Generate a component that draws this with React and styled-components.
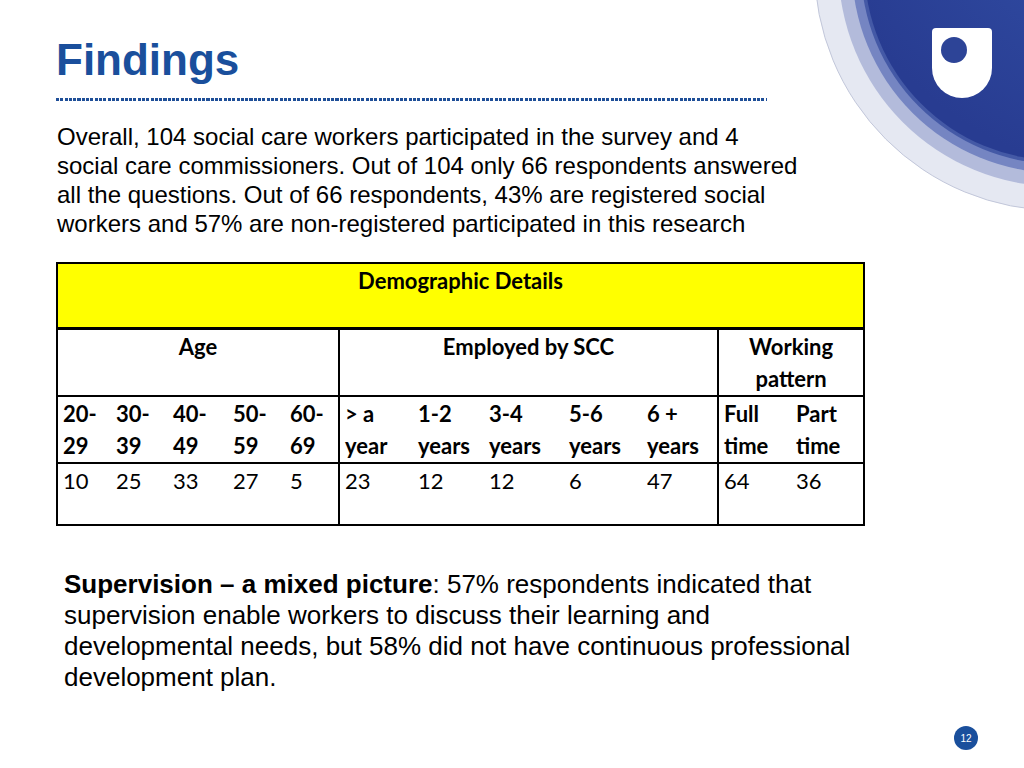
import React from 'react';
import styled, { createGlobalStyle } from 'styled-components';

const GlobalStyle = createGlobalStyle`
  html, body {
    margin: 0;
    padding: 0;
    background: #ffffff;
  }
`;

const ageCols = [
  { range: ['20-', '29'], value: '10', width: 54 },
  { range: ['30-', '39'], value: '25', width: 57 },
  { range: ['40-', '49'], value: '33', width: 60 },
  { range: ['50-', '59'], value: '27', width: 57 },
  { range: ['60-', '69'], value: '5', width: 54 },
];

const employedCols = [
  { range: ['> a', 'year'], value: '23', width: 74 },
  { range: ['1-2', 'years'], value: '12', width: 71 },
  { range: ['3-4', 'years'], value: '12', width: 80 },
  { range: ['5-6', 'years'], value: '6', width: 78 },
  { range: ['6 +', 'years'], value: '47', width: 76 },
];

const workCols = [
  { range: ['Full', 'time'], value: '64', width: 73 },
  { range: ['Part', 'time'], value: '36', width: 73 },
];

const Logo = () => (
  <LogoWrap>
    <svg width="260" height="240" viewBox="0 0 260 240">
      <defs>
        <radialGradient id="disc" cx="0.75" cy="0.15" r="0.9">
          <stop offset="0" stopColor="#3656ae" />
          <stop offset="1" stopColor="#283c91" />
        </radialGradient>
      </defs>
      <circle cx="294" cy="-33" r="243.5" fill="#e5e8f2" stroke="#c2c7da" strokeWidth="1" />
      <circle cx="294" cy="-33" r="219.5" fill="#b3bbdb" />
      <circle cx="294" cy="-33" r="206" fill="#7585c2" />
      <circle cx="294" cy="-33" r="197" fill="#4459a6" />
      <circle cx="294" cy="-33" r="193.5" fill="url(#disc)" />
      <path
        d="M172 28 H224 Q228 28 228 32 V68 A30 30 0 0 1 168 68 V32 Q168 28 172 28 Z"
        fill="#ffffff"
      />
      <circle cx="190" cy="50" r="13" fill="#2d4497" />
    </svg>
  </LogoWrap>
);

const App = () => {
  const groups = [...ageCols, ...employedCols, ...workCols];
  const isGroupStart = (i) => i === ageCols.length || i === ageCols.length + employedCols.length;

  return (
    <>
      <GlobalStyle />
      <Slide>
        <Logo />
        <Title>Findings</Title>
        <DottedRule />
        <Intro>
          Overall, 104 social care workers participated in the survey and 4<br />
          social care commissioners. Out of 104 only 66 respondents answered<br />
          all the questions. Out of 66 respondents, 43% are registered social<br />
          workers and 57% are non-registered participated in this research
        </Intro>

        <Table>
          <colgroup>
            {groups.map((c, i) => (
              <col key={i} style={{ width: c.width }} />
            ))}
          </colgroup>
          <tbody>
            <tr>
              <Banner colSpan={groups.length}>Demographic Details</Banner>
            </tr>
            <tr>
              <GroupHead colSpan={ageCols.length}>Age</GroupHead>
              <GroupHead colSpan={employedCols.length} divider>
                Employed by SCC
              </GroupHead>
              <GroupHead colSpan={workCols.length} divider>
                Working<br />pattern
              </GroupHead>
            </tr>
            <RangeRow>
              {groups.map((c, i) => (
                <Cell key={i} divider={isGroupStart(i)} bold>
                  {c.range[0]}
                  <br />
                  {c.range[1]}
                </Cell>
              ))}
            </RangeRow>
            <ValueRow>
              {groups.map((c, i) => (
                <Cell key={i} divider={isGroupStart(i)}>
                  {c.value}
                </Cell>
              ))}
            </ValueRow>
          </tbody>
        </Table>

        <Summary>
          <strong>Supervision – a mixed picture</strong>: 57% respondents indicated that<br />
          supervision enable workers to discuss their learning and<br />
          developmental needs, but 58% did not have continuous professional<br />
          development plan.
        </Summary>

        <PageBadge>12</PageBadge>
      </Slide>
    </>
  );
};

export default App;

const Slide = styled.div`
  position: relative;
  width: 1024px;
  height: 768px;
  overflow: hidden;
  background: #ffffff;
  font-family: 'Liberation Sans', Arial, sans-serif;
  color: #000000;
  padding: 38px 0 0 56px;
  box-sizing: border-box;
`;

const LogoWrap = styled.div`
  position: absolute;
  top: 0;
  right: 0;
  width: 260px;
  height: 240px;
  line-height: 0;
`;

const Title = styled.h1`
  position: relative;
  margin: 0;
  font-size: 44px;
  line-height: 44px;
  font-weight: bold;
  color: #1a4f9c;
`;

const DottedRule = styled.div`
  width: 711px;
  height: 3px;
  margin-top: 16px;
  background: repeating-linear-gradient(
    to right,
    #1f4f98 0,
    #1f4f98 3px,
    transparent 3px,
    transparent 4.3px
  );
`;

const Intro = styled.p`
  position: relative;
  margin: 21px 0 0 1px;
  font-size: 24px;
  line-height: 29px;
  white-space: nowrap;
`;

const Table = styled.table`
  margin-top: 24px;
  width: 807px;
  table-layout: fixed;
  border-collapse: collapse;
  border: 2px solid #000000;
  font-family: Lato, 'Open Sans', sans-serif;
  font-size: 22px;
  line-height: 32px;
`;

const Banner = styled.td`
  height: 62px;
  padding: 1px 0 0;
  vertical-align: top;
  text-align: center;
  font-weight: bold;
  background: #ffff00;
  border-bottom: 3px solid #000000;
`;

const GroupHead = styled.td`
  height: 64px;
  padding: 1px 4px 0;
  vertical-align: top;
  text-align: center;
  font-weight: bold;
  border-bottom: 2px solid #000000;
  border-left: ${(p) => (p.divider ? '2px solid #000000' : 'none')};
`;

const RangeRow = styled.tr`
  height: 65px;
`;

const ValueRow = styled.tr`
  height: 62px;
  border-top: 2px solid #000000;
`;

const Cell = styled.td`
  padding: 1px 0 0 5px;
  vertical-align: top;
  white-space: nowrap;
  font-weight: ${(p) => (p.bold ? 'bold' : 'normal')};
  border-left: ${(p) => (p.divider ? '2px solid #000000' : 'none')};
`;

const Summary = styled.p`
  margin: 43px 0 0 8px;
  font-size: 26px;
  line-height: 31px;
  white-space: nowrap;
`;

const PageBadge = styled.div`
  position: absolute;
  left: 954px;
  top: 726px;
  width: 24px;
  height: 24px;
  border-radius: 50%;
  background: #1a4f9c;
  color: #ffffff;
  font-size: 10px;
  display: flex;
  align-items: center;
  justify-content: center;
`;
